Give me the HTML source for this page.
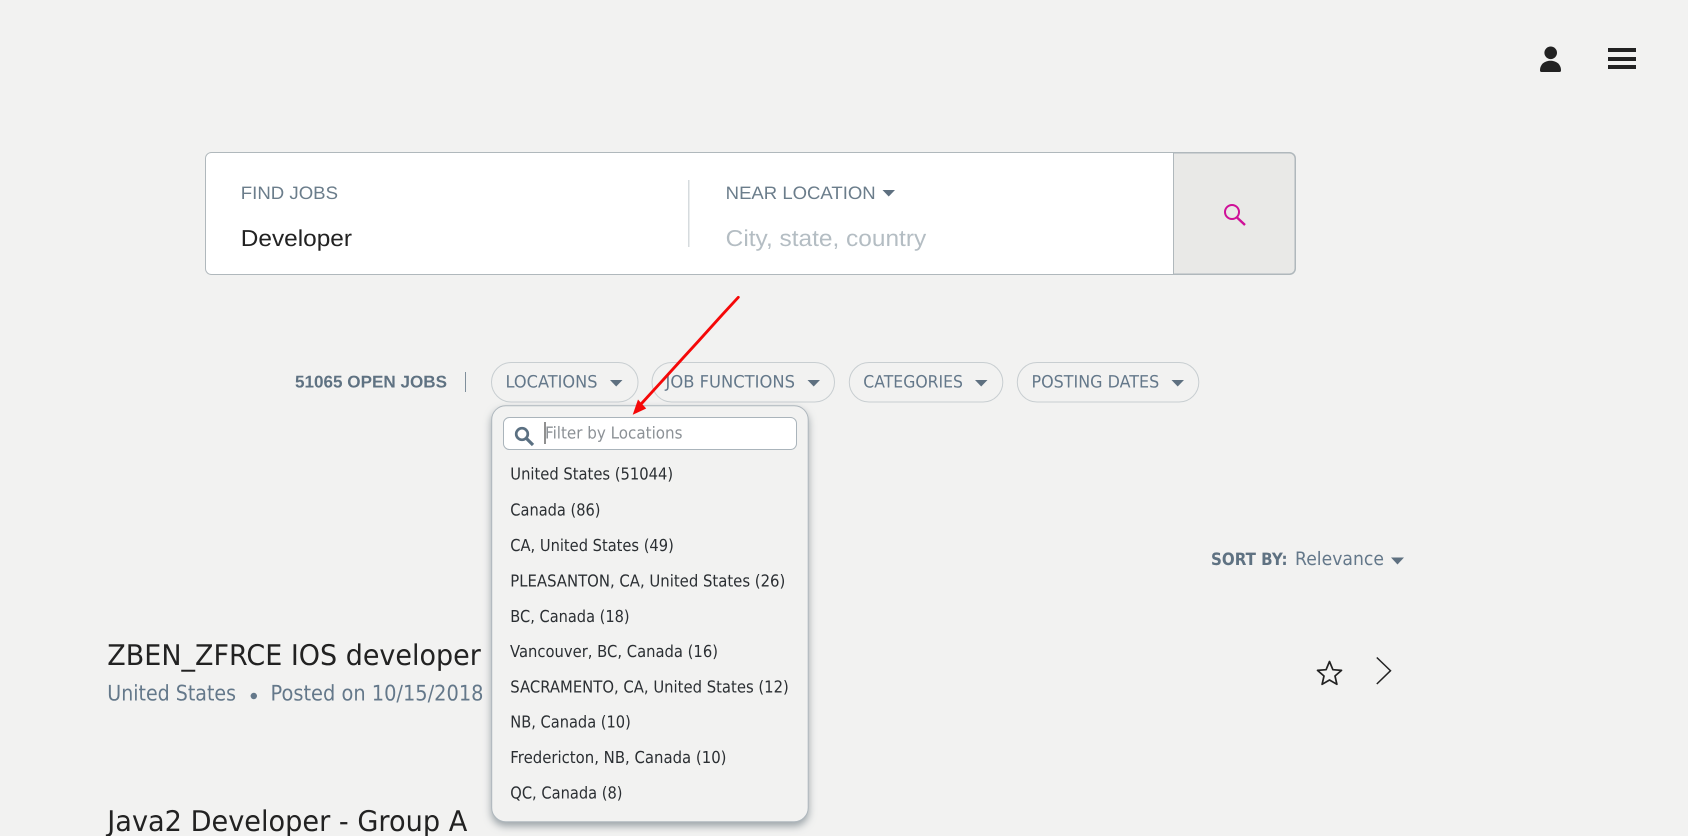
<!DOCTYPE html>
<html lang="en">
<head>
<meta charset="utf-8">
<title>Job search</title>
<style>
html,body{margin:0;padding:0;width:1688px;height:836px;overflow:hidden;background:#f2f2f1}
svg{display:block;position:absolute;left:0;top:0}
text{text-rendering:geometricPrecision;white-space:pre}
.o{font-family:"DejaVu Sans","Liberation Sans",sans-serif}
.m{font-family:"Liberation Sans","DejaVu Sans",sans-serif}
</style>
</head>
<body>
<svg width="1688" height="836" viewBox="0 0 1688 836" xmlns="http://www.w3.org/2000/svg">
<rect width="1688" height="836" fill="#f2f2f1"/>

<!-- header icons -->
<circle cx="1550.700" cy="52.800" r="6.300" fill="#222"/>
<path d="M1540 70.500C1540 64 1545 60.800 1550.500 60.800S1561 64 1561 70.500C1561 71.500 1560.400 72 1559.500 72H1541.500C1540.600 72 1540 71.500 1540 70.500Z" fill="#222"/>
<rect x="1608" y="48" width="28" height="4" fill="#222"/>
<rect x="1608" y="57" width="28" height="4" fill="#222"/>
<rect x="1608" y="65" width="28" height="4" fill="#222"/>

<!-- search box -->
<rect x="205.500" y="152.500" width="1090" height="122" rx="6" fill="#fff" stroke="#b0b8bc"/>
<path d="M1173.500 153H1289.500a5.500 5.500 0 0 1 5.500 5.500V268.500a5.500 5.500 0 0 1-5.500 5.500H1173.500Z" fill="#e9e9e7" stroke="#b0b8bc"/>
<rect x="688" y="180" width="1.500" height="67" fill="#d6dbde"/>
<text class="m" x="240.800" y="199" font-size="18" fill="#6b7d8b" textLength="97.200" lengthAdjust="spacingAndGlyphs">FIND JOBS</text>
<text class="m" x="240.800" y="246" font-size="23" fill="#222" textLength="111.200" lengthAdjust="spacingAndGlyphs">Developer</text>
<text class="m" x="725.700" y="199" font-size="18" fill="#6b7d8b" textLength="150" lengthAdjust="spacingAndGlyphs">NEAR LOCATION</text>
<path d="M882.500 190H895L888.700 196.500Z" fill="#5e7080"/>
<text class="m" x="725.700" y="246" font-size="23" fill="#b4bdc3" textLength="200.500" lengthAdjust="spacingAndGlyphs">City, state, country</text>
<circle cx="1232" cy="212" r="7" fill="none" stroke="#cf1098" stroke-width="2"/>
<path d="M1237 217.500L1245 225" fill="none" stroke="#cf1098" stroke-width="2.400"/>

<!-- filter bar -->
<text class="m" x="295" y="387.500" font-size="17" font-weight="700" fill="#5f7282" textLength="152" lengthAdjust="spacingAndGlyphs">51065 OPEN JOBS</text>
<rect x="465" y="372" width="1" height="20" fill="#7f8f9b"/>

<rect x="491.500" y="362.500" width="146.500" height="39.500" rx="19.700" fill="none" stroke="#c8ced1"/>
<text class="o" x="505.500" y="387.700" font-size="17" fill="#64788a" textLength="92" lengthAdjust="spacingAndGlyphs">LOCATIONS</text>
<path d="M610 380H622.500L616.200 386.500Z" fill="#5e7080"/>

<rect x="652" y="362.500" width="182.500" height="39.500" rx="19.700" fill="none" stroke="#c8ced1"/>
<text class="o" x="665.500" y="387.700" font-size="17" fill="#64788a" textLength="129.500" lengthAdjust="spacingAndGlyphs">JOB FUNCTIONS</text>
<path d="M807.500 380H820L813.700 386.500Z" fill="#5e7080"/>

<rect x="849.300" y="362.500" width="153.500" height="39.500" rx="19.700" fill="none" stroke="#c8ced1"/>
<text class="o" x="863.300" y="387.700" font-size="17" fill="#64788a" textLength="99.700" lengthAdjust="spacingAndGlyphs">CATEGORIES</text>
<path d="M975 380H987.500L981.200 386.500Z" fill="#5e7080"/>

<rect x="1017.300" y="362.500" width="181.500" height="39.500" rx="19.700" fill="none" stroke="#c8ced1"/>
<text class="o" x="1031.500" y="387.700" font-size="17" fill="#64788a" textLength="127.700" lengthAdjust="spacingAndGlyphs">POSTING DATES</text>
<path d="M1171.500 380H1184L1177.700 386.500Z" fill="#5e7080"/>

<!-- sort -->
<text class="o" x="1211" y="565" font-size="17" font-weight="700" fill="#5f7282" textLength="76.500" lengthAdjust="spacingAndGlyphs">SORT BY:</text>
<text class="o" x="1295" y="565" font-size="18.500" fill="#64788a" textLength="89" lengthAdjust="spacingAndGlyphs">Relevance</text>
<path d="M1391 557.500H1404L1397.500 564.500Z" fill="#5e7080"/>

<!-- job list -->
<text class="o" x="107.300" y="665.200" font-size="28.500" fill="#222" textLength="373.500" lengthAdjust="spacingAndGlyphs">ZBEN_ZFRCE IOS developer</text>
<text class="o" x="107.300" y="700.700" font-size="21.500" fill="#64788a" textLength="128.700" lengthAdjust="spacingAndGlyphs">United States</text>
<circle cx="253.800" cy="696" r="3.200" fill="#64788a"/>
<text class="o" x="270.500" y="700.700" font-size="21.500" fill="#64788a" textLength="213" lengthAdjust="spacingAndGlyphs">Posted on 10/15/2018</text>
<text class="o" x="107.300" y="831.200" font-size="28.500" fill="#222" textLength="360" lengthAdjust="spacingAndGlyphs">Java2 Developer - Group A</text>

<polygon points="1329.500,661.500 1332.900,669.700 1341.500,670.400 1335,676 1336.900,684.300 1329.500,680 1322.100,684.300 1324,676 1317.500,670.400 1326.100,669.700" fill="none" stroke="#222" stroke-width="1.700" stroke-linejoin="round"/>
<path d="M1376.800 657.500L1390.500 670.700L1376.800 684" fill="none" stroke="#222" stroke-width="1.500"/>

<!-- dropdown -->
<rect x="491.700" y="405.700" width="316.500" height="416" rx="14" fill="#f2f2f1" stroke="#aeb7bd" stroke-width="1" style="filter:drop-shadow(0 4px 4px rgba(70,85,95,.5))"/>
<rect x="503.500" y="417.500" width="293" height="32" rx="6" fill="#fff" stroke="#aab4bb"/>
<circle cx="522" cy="434" r="5.800" fill="none" stroke="#5b7082" stroke-width="2.700"/>
<path d="M526.500 438.500L533 445" fill="none" stroke="#5b7082" stroke-width="3.200"/>
<rect x="544.500" y="422" width="1" height="22" fill="#222"/>
<text class="o" x="545" y="438.300" font-size="16.500" fill="#8c9196" textLength="137.500" lengthAdjust="spacingAndGlyphs">Filter by Locations</text>

<g class="o" font-size="16.500" fill="#2b2f33">
<text x="510.300" y="479.500" textLength="162.800" lengthAdjust="spacingAndGlyphs">United States (51044)</text>
<text x="510.300" y="515.300" textLength="90.200" lengthAdjust="spacingAndGlyphs">Canada (86)</text>
<text x="510.300" y="551" textLength="163.500" lengthAdjust="spacingAndGlyphs">CA, United States (49)</text>
<text x="510.300" y="586.400" textLength="275" lengthAdjust="spacingAndGlyphs">PLEASANTON, CA, United States (26)</text>
<text x="510.300" y="621.800" textLength="119.300" lengthAdjust="spacingAndGlyphs">BC, Canada (18)</text>
<text x="510" y="657" textLength="208" lengthAdjust="spacingAndGlyphs">Vancouver, BC, Canada (16)</text>
<text x="510.300" y="692.500" textLength="278.500" lengthAdjust="spacingAndGlyphs">SACRAMENTO, CA, United States (12)</text>
<text x="510.300" y="727.700" textLength="120.500" lengthAdjust="spacingAndGlyphs">NB, Canada (10)</text>
<text x="510.300" y="763.200" textLength="216.200" lengthAdjust="spacingAndGlyphs">Fredericton, NB, Canada (10)</text>
<text x="510.300" y="798.600" textLength="112.200" lengthAdjust="spacingAndGlyphs">QC, Canada (8)</text>
</g>

<!-- red annotation arrow -->
<path d="M738.300 297.300L722 315L699 340.500L683 358L663 380L642 403" fill="none" stroke="#f50808" stroke-width="2.800" stroke-linecap="round"/>
<polygon points="632.700,414.800 638,399.500 646.200,408.500" fill="#f50808"/>
</svg>
</body>
</html>
